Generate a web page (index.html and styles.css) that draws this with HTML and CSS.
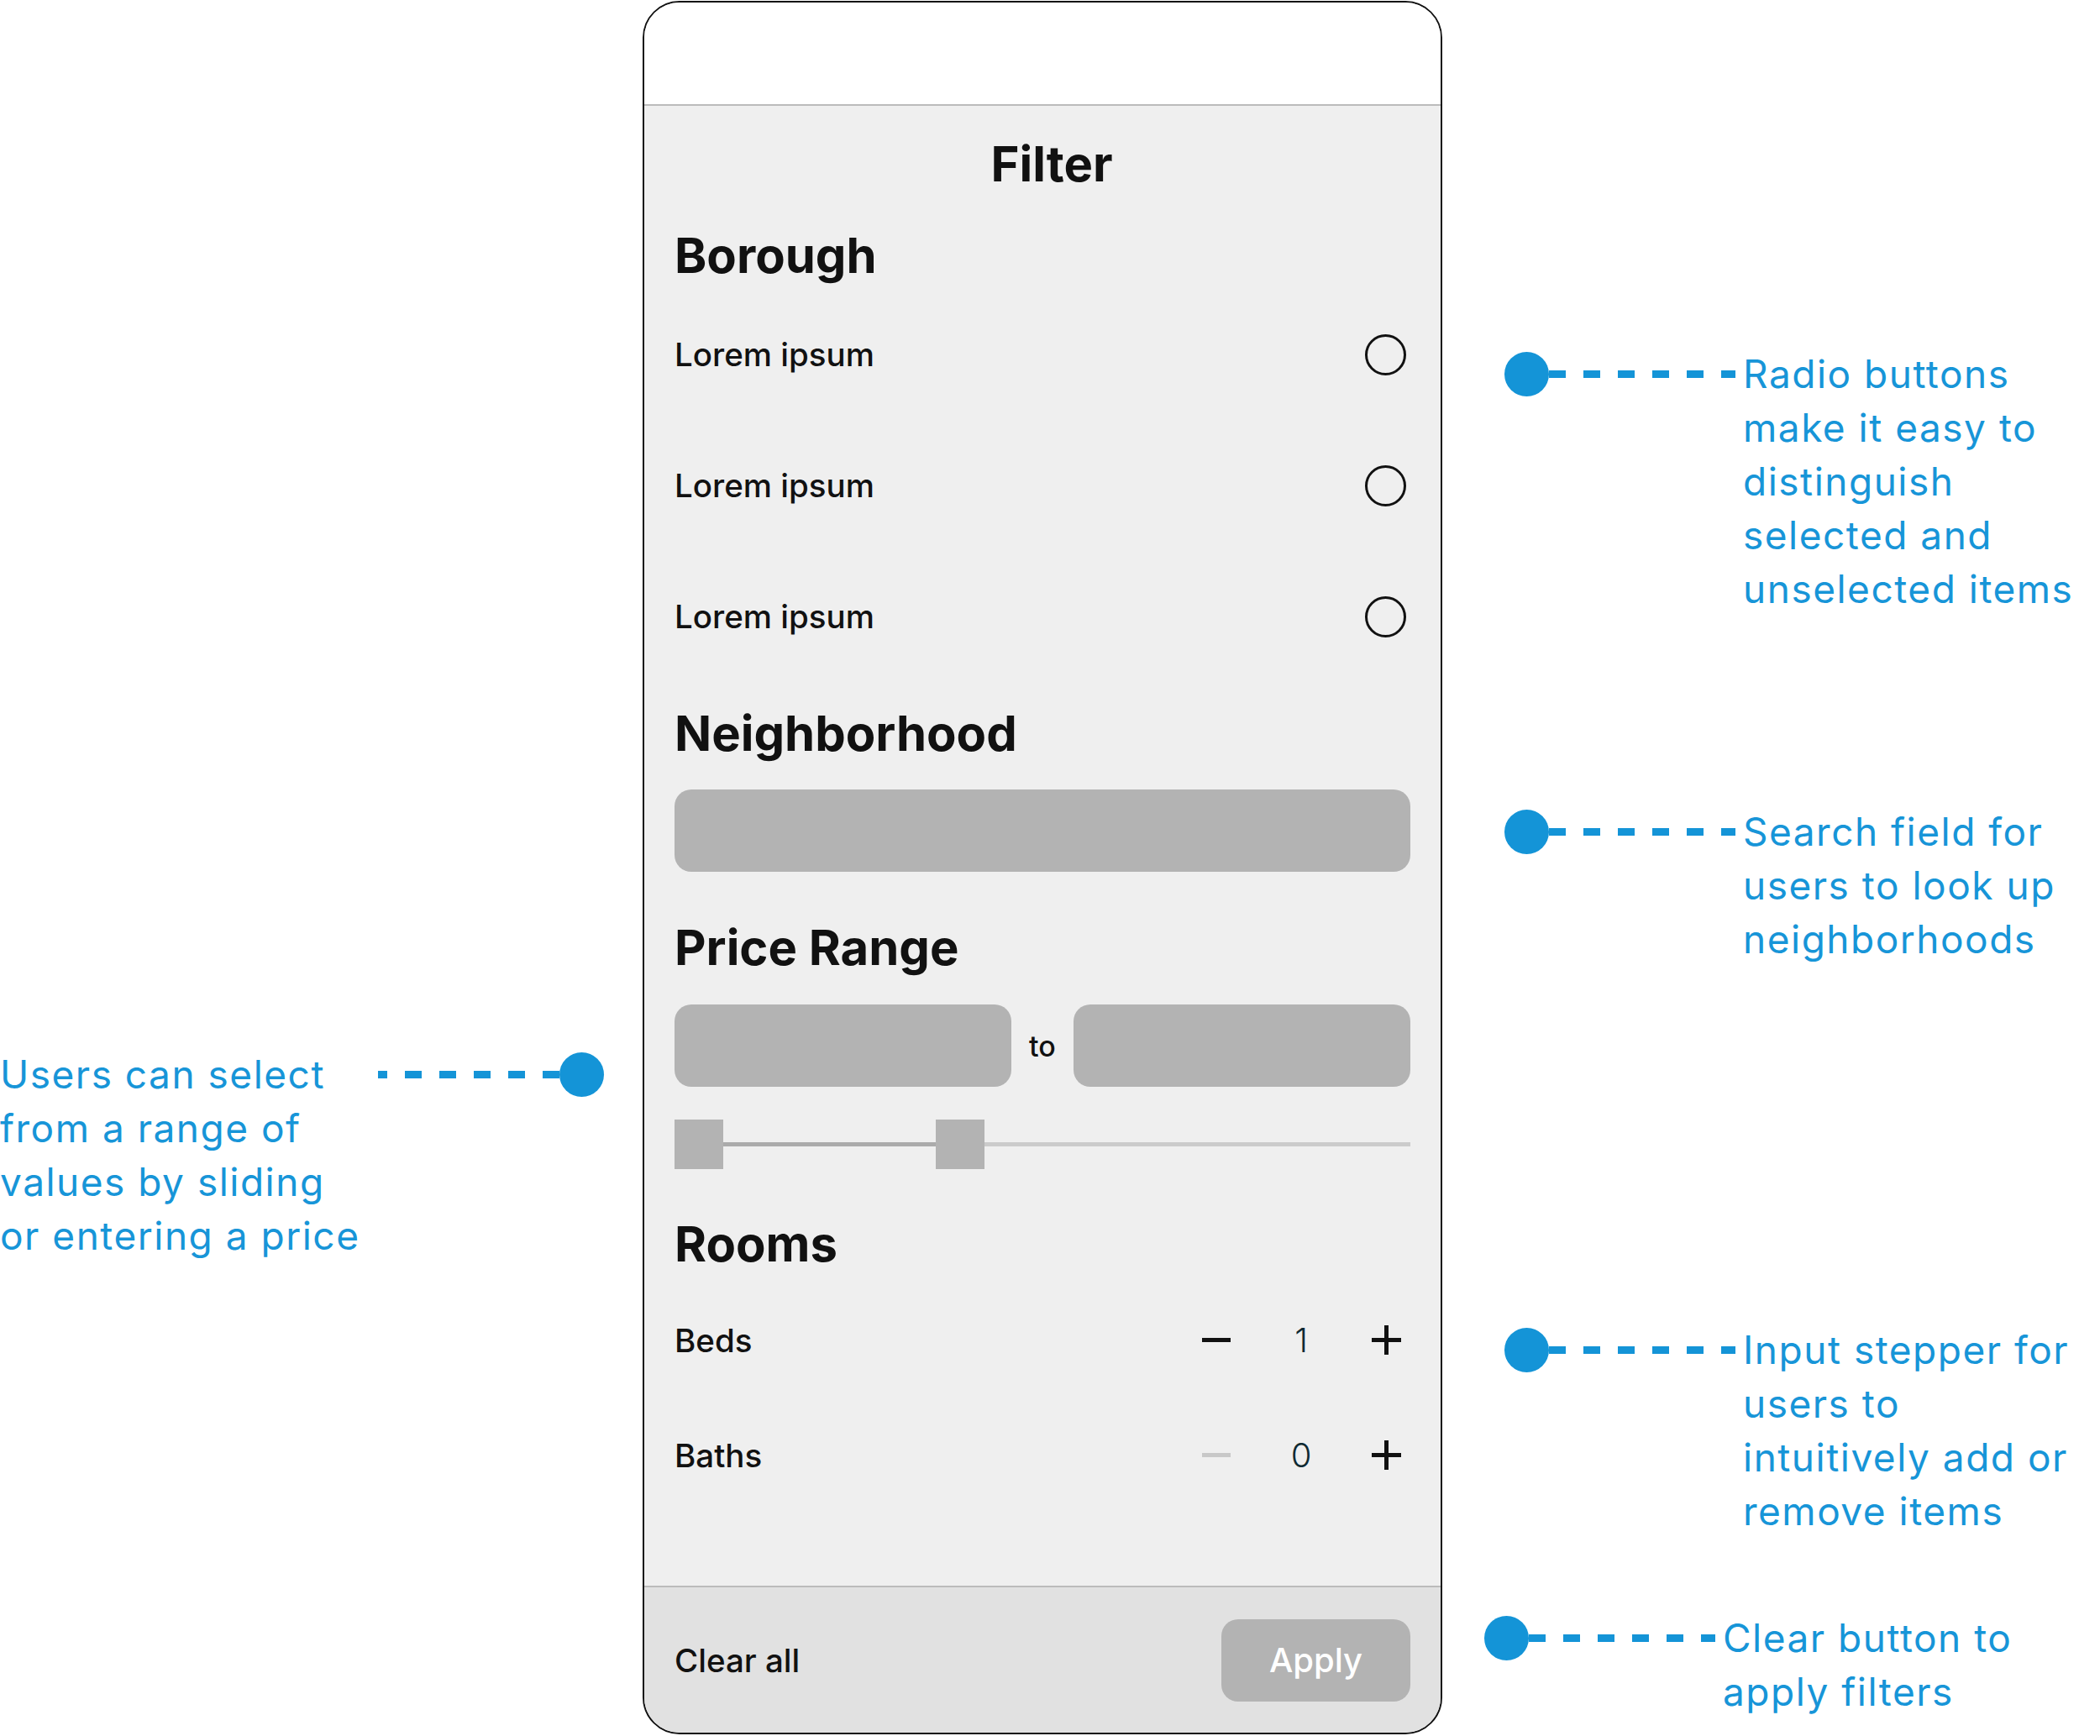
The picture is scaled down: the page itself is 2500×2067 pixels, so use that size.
FILE: index.html
```html
<!DOCTYPE html>
<html lang="en">
<head>
    <meta charset="UTF-8">
    <meta name="viewport" content="width=device-width, initial-scale=1.0">
    <title>Filter</title>
    <link rel="stylesheet" href="styles.css">
</head>
<body>
    <div class="canvas">
        <div class="side side-left">
            <div class="note note-left">
                <div class="note-text">Users can select<br>from a range of<br>values by sliding<br>or entering a price</div>
                <div class="connector">
                    <div class="dashes dashes-left"></div>
                    <div class="dot"></div>
                </div>
            </div>
        </div>

        <div class="phone">
            <div class="phone-header"></div>
            <div class="panel">
                <div class="panel-title">Filter</div>

                <div class="section-title">Borough</div>
                <div class="option-row">
                    <span>Lorem ipsum</span>
                    <span class="radio"></span>
                </div>
                <div class="option-row">
                    <span>Lorem ipsum</span>
                    <span class="radio"></span>
                </div>
                <div class="option-row">
                    <span>Lorem ipsum</span>
                    <span class="radio"></span>
                </div>

                <div class="section-title neighborhood-title">Neighborhood</div>
                <div class="field search-field"></div>

                <div class="section-title price-title">Price Range</div>
                <div class="price-row">
                    <div class="field"></div>
                    <span class="price-to">to</span>
                    <div class="field"></div>
                </div>
                <div class="slider">
                    <div class="thumb"></div>
                    <div class="track track-active"></div>
                    <div class="thumb"></div>
                    <div class="track"></div>
                </div>

                <div class="section-title rooms-title">Rooms</div>
                <div class="stepper-row">
                    <span>Beds</span>
                    <div class="stepper">
                        <span class="step-btn"><span class="minus"></span></span>
                        <span class="step-value">1</span>
                        <span class="step-btn"><span class="plus"></span></span>
                    </div>
                </div>
                <div class="stepper-row">
                    <span>Baths</span>
                    <div class="stepper">
                        <span class="step-btn"><span class="minus disabled"></span></span>
                        <span class="step-value">0</span>
                        <span class="step-btn"><span class="plus"></span></span>
                    </div>
                </div>
            </div>
            <div class="panel-footer">
                <span>Clear all</span>
                <button class="apply-btn">Apply</button>
            </div>
        </div>

        <div class="side side-right">
            <div class="note note-radio">
                <div class="connector">
                    <div class="dot"></div>
                    <div class="dashes"></div>
                </div>
                <div class="note-text">Radio buttons<br>make it easy to<br>distinguish<br>selected and<br>unselected items</div>
            </div>
            <div class="note note-search">
                <div class="connector">
                    <div class="dot"></div>
                    <div class="dashes"></div>
                </div>
                <div class="note-text">Search field for<br>users to look up<br>neighborhoods</div>
            </div>
            <div class="note note-stepper">
                <div class="connector">
                    <div class="dot"></div>
                    <div class="dashes"></div>
                </div>
                <div class="note-text">Input stepper for<br>users to<br>intuitively add or<br>remove items</div>
            </div>
            <div class="note note-clear">
                <div class="connector">
                    <div class="dot"></div>
                    <div class="dashes"></div>
                </div>
                <div class="note-text">Clear button to<br>apply filters</div>
            </div>
        </div>
    </div>
</body>
</html>
```

FILE: styles.css
```css
* {
    box-sizing: border-box;
}

body {
    margin: 0;
    background: #fff;
    font-family: "Inter", "Liberation Sans", sans-serif;
    color: #111;
}

.canvas {
    display: flex;
    width: 2500px;
    height: 2067px;
}

/* annotations */

.side {
    flex: 1;
    display: flex;
    flex-direction: column;
}

.side-left {
    flex: none;
    width: 765px;
}

.note {
    display: flex;
    align-items: flex-start;
}

.note-text {
    font-size: 46px;
    line-height: 64px;
    color: #1795d8;
    white-space: nowrap;
    letter-spacing: 1.5px;
}

.connector {
    display: flex;
    align-items: center;
    height: 64px;
}

.dot {
    width: 53px;
    height: 53px;
    border-radius: 50%;
    background: #1494d7;
    flex: none;
}

.dashes {
    width: 222px;
    height: 9px;
    background: repeating-linear-gradient(to right, #1494d7 0 20px, transparent 20px 41px);
}

.dashes-left {
    width: 216px;
    background: repeating-linear-gradient(to left, #1494d7 0 20px, transparent 20px 41px);
}

.note-left {
    margin-top: 1247px;
    justify-content: space-between;
    padding-right: 46px;
}

.side-right .note-text {
    margin-left: 9px;
}

.note-radio {
    margin-top: 413px;
    margin-left: 74px;
}

.note-search {
    margin-top: 225px;
    margin-left: 74px;
}

.note-stepper {
    margin-top: 425px;
    margin-left: 74px;
}

.note-clear {
    margin-top: 87px;
    margin-left: 50px;
}

/* phone */

.phone {
    flex: none;
    width: 952px;
    height: 2064px;
    margin-top: 1px;
    border: 2.5px solid #111;
    border-radius: 44px;
    overflow: hidden;
    display: flex;
    flex-direction: column;
    background: #eee;
}

.phone-header {
    flex: none;
    height: 123px;
    background: #fff;
    border-bottom: 2px solid #bbb;
}

.panel {
    flex: 1;
    display: flex;
    flex-direction: column;
    padding: 0 36px;
    background: #efefef;
}

.panel-title {
    flex: none;
    height: 138px;
    line-height: 138px;
    text-align: center;
    padding-left: 22px;
    font-size: 58px;
    font-weight: 700;
}

.section-title {
    flex: none;
    height: 80px;
    line-height: 80px;
    font-size: 58px;
    font-weight: 700;
}

.neighborhood-title {
    margin-top: 21px;
}

.price-title {
    margin-top: 50px;
}

.rooms-title {
    margin-top: 49px;
    margin-bottom: 6px;
}

.option-row,
.stepper-row {
    flex: none;
    display: flex;
    align-items: center;
    justify-content: space-between;
    height: 156px;
    font-size: 38.5px;
    font-weight: 500;
}

.stepper-row {
    height: 137px;
}

.radio {
    width: 49px;
    height: 49px;
    border: 3.5px solid #111;
    border-radius: 50%;
    margin-right: 5px;
}

.field {
    height: 98px;
    border-radius: 20px;
    background: #b3b3b3;
}

.search-field {
    flex: none;
    margin-top: 27px;
}

.price-row {
    flex: none;
    display: flex;
    align-items: center;
    gap: 21px;
    margin-top: 28px;
}

.price-row .field {
    flex: 1;
}

.price-to {
    font-size: 34px;
    font-weight: 500;
}

.slider {
    flex: none;
    display: flex;
    align-items: center;
    margin-top: 39px;
    height: 59px;
}

.thumb {
    width: 58px;
    height: 59px;
    background: #b3b3b3;
    flex: none;
}

.track {
    flex: 1;
    height: 5px;
    background: #cbcbcb;
}

.track-active {
    flex: none;
    width: 253px;
    background: #ababab;
}

.stepper {
    display: flex;
    align-items: center;
    gap: 53px;
    margin-right: 5px;
}

.step-btn {
    width: 48px;
    height: 48px;
    display: flex;
    align-items: center;
    justify-content: center;
}

.minus {
    width: 34px;
    height: 5px;
    background: #111;
}

.minus.disabled {
    background: #c8c8c8;
}

.plus {
    width: 35px;
    height: 35px;
    background:
        linear-gradient(#111, #111) center / 35px 5px no-repeat,
        linear-gradient(#111, #111) center / 5px 35px no-repeat;
}

.step-value {
    width: 48px;
    text-align: center;
    font-size: 40px;
    font-weight: 300;
    color: #0f2a32;
}

.panel-footer {
    flex: none;
    height: 175px;
    border-top: 2px solid #bbb;
    background: #e1e1e1;
    display: flex;
    align-items: center;
    justify-content: space-between;
    padding: 0 36px;
    font-size: 38.5px;
    font-weight: 500;
}

.apply-btn {
    width: 225px;
    height: 98px;
    border: none;
    border-radius: 20px;
    background: #b3b3b3;
    color: #fff;
    font-family: inherit;
    font-size: 40px;
    font-weight: 500;
}
```
